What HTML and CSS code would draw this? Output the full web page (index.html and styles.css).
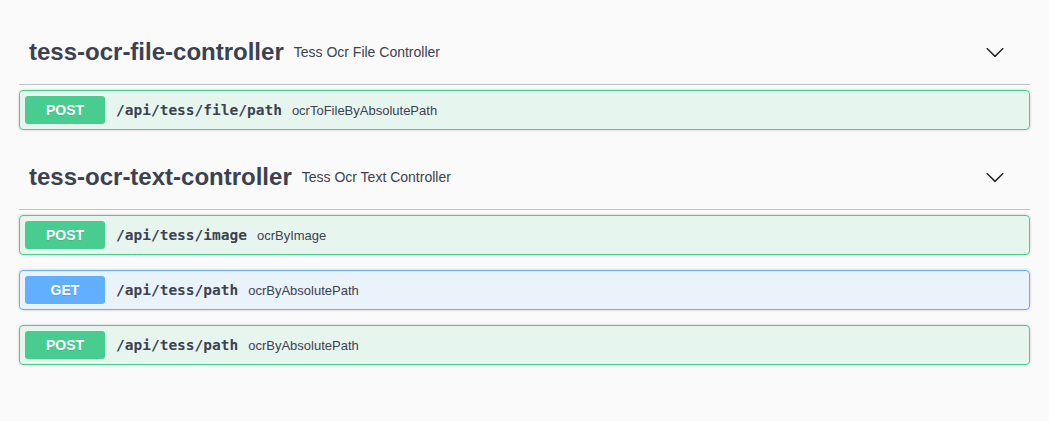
FILE: index.html
```html
<!DOCTYPE html>
<html>
<head>
<meta charset="utf-8">
<link rel="stylesheet" href="styles.css">
</head>
<body>
<div class="wrapper">
  <section class="tag-section">
    <h4 class="tag">
      <span class="tag-name">tess-ocr-file-controller</span>
      <small class="tag-desc">Tess Ocr File Controller</small>
      <span class="spacer"></span>
      <button class="expand"><svg width="20" height="20" viewBox="0 0 20 20"><path d="M17.418 6.109c.272-.268.709-.268.979 0s.271.701 0 .969l-7.908 7.83c-.27.268-.707.268-.979 0l-7.908-7.83c-.27-.268-.27-.701 0-.969.271-.268.709-.268.979 0L10 13.25l7.418-7.141z"/></svg></button>
    </h4>
    <div class="opblock post">
      <span class="method">POST</span>
      <span class="path">/api/tess/file/path</span>
      <span class="desc">ocrToFileByAbsolutePath</span>
    </div>
  </section>
  <section class="tag-section">
    <h4 class="tag">
      <span class="tag-name">tess-ocr-text-controller</span>
      <small class="tag-desc">Tess Ocr Text Controller</small>
      <span class="spacer"></span>
      <button class="expand"><svg width="20" height="20" viewBox="0 0 20 20"><path d="M17.418 6.109c.272-.268.709-.268.979 0s.271.701 0 .969l-7.908 7.83c-.27.268-.707.268-.979 0l-7.908-7.83c-.27-.268-.27-.701 0-.969.271-.268.709-.268.979 0L10 13.25l7.418-7.141z"/></svg></button>
    </h4>
    <div class="opblock post">
      <span class="method">POST</span>
      <span class="path">/api/tess/image</span>
      <span class="desc">ocrByImage</span>
    </div>
    <div class="opblock get">
      <span class="method">GET</span>
      <span class="path">/api/tess/path</span>
      <span class="desc">ocrByAbsolutePath</span>
    </div>
    <div class="opblock post">
      <span class="method">POST</span>
      <span class="path">/api/tess/path</span>
      <span class="desc">ocrByAbsolutePath</span>
    </div>
  </section>
</div>
</body>
</html>
```
FILE: styles.css
```css
html, body {
  margin: 0;
  padding: 0;
  background: #fafafa;
}
body {
  font-family: "Liberation Sans", Arial, sans-serif;
  color: #3b4151;
}
.wrapper {
  padding: 20px 19px;
}
.tag-section {
  display: flex;
  flex-direction: column;
}
.tag {
  display: flex;
  align-items: center;
  box-sizing: border-box;
  height: 65px;
  margin: 0 0 5px;
  padding: 0 25px 0 10px;
  border-bottom: 1px solid rgba(59, 65, 81, 0.3);
  font-size: 24px;
  font-weight: 700;
  color: #3b4151;
}
.tag-name {
  line-height: 1;
}
.tag-desc {
  font-size: 14px;
  font-weight: 400;
  padding: 0 10px;
  line-height: 1;
}
.spacer {
  flex: 1;
}
.expand {
  border: none;
  background: none;
  padding: 0;
  width: 20px;
  height: 20px;
  display: flex;
}
.expand svg {
  fill: #222;
}
.opblock {
  display: flex;
  align-items: center;
  padding: 5px;
  margin: 0 0 15px;
  border: 1px solid #49cc90;
  border-radius: 4px;
  background: rgba(73, 204, 144, 0.1);
  box-shadow: 0 0 3px rgba(0, 0, 0, 0.19);
}
.opblock.get {
  border-color: #61affe;
  background: rgba(97, 175, 254, 0.1);
}
.method {
  box-sizing: border-box;
  width: 80px;
  height: 28px;
  line-height: 28px;
  border-radius: 3px;
  background: #49cc90;
  color: #fff;
  font-size: 14px;
  font-weight: 700;
  text-align: center;
  text-shadow: 0 1px 0 rgba(0, 0, 0, 0.1);
}
.get .method {
  background: #61affe;
}
.path {
  font-family: "DejaVu Sans Mono", monospace;
  font-size: 14.5px;
  font-weight: 700;
  padding: 0 10px 0 11px;
  color: #3b4151;
}
.desc {
  font-size: 13px;
  color: #3b4151;
}
```
